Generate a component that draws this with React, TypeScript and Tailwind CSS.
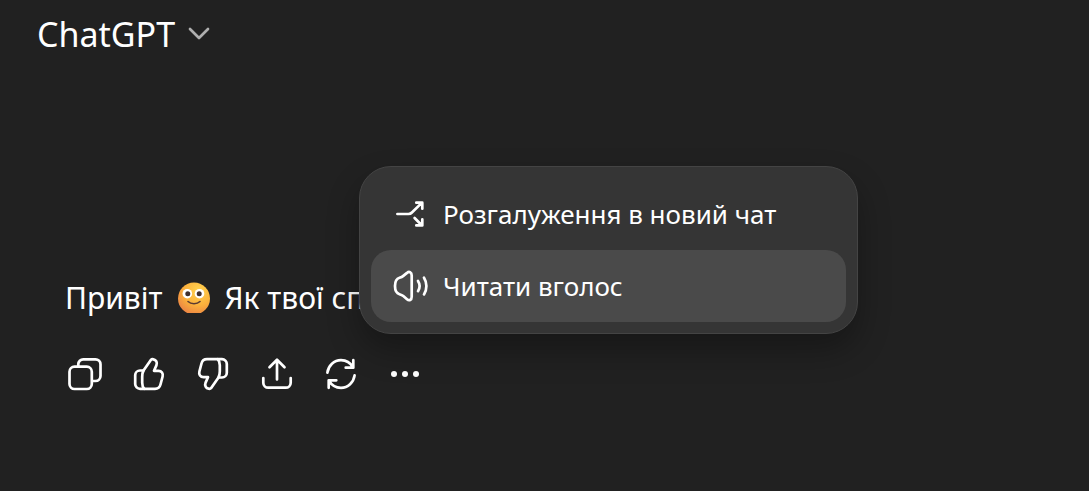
import type { ReactNode, SVGProps } from 'react'

function Icon({ children, ...props }: SVGProps<SVGSVGElement>) {
  return (
    <svg
      fill="none"
      stroke="currentColor"
      strokeWidth={2.7}
      strokeLinecap="round"
      strokeLinejoin="round"
      aria-hidden="true"
      {...props}
    >
      {children}
    </svg>
  )
}

const thumb = (
  <>
    <path d="M22 5.8 14.5 16.5H11a4.8 4.8 0 0 0-4.8 4.8V30A4.8 4.8 0 0 0 11 34.8h15c2.8 0 4.8-1.6 5.5-4.3l2.1-8c.8-3.1-1-5.7-4.1-5.7H25l2.4-5.4c1.2-2.9-.3-5.6-3-6.1-1-.2-1.8-.2-2.4.5Z" />
    <path d="M14.5 16.5c-1 1.9-1.3 3.7-1.3 6.2v6.1c0 2.6.6 4.6 2 6" />
  </>
)

const actions: { label: string; icon: ReactNode }[] = [
  {
    label: 'Копіювати',
    icon: (
      <>
        <rect x="4.5" y="12.7" width="22.3" height="22.3" rx="5" />
        <path d="M13.3 12.2v-1.9a5 5 0 0 1 5-5h12.2a5 5 0 0 1 5 5V22a5 5 0 0 1-5 5h-3.2" />
      </>
    ),
  },
  { label: 'Гарна відповідь', icon: thumb },
  { label: 'Погана відповідь', icon: <g transform="rotate(180 20 20)">{thumb}</g> },
  {
    label: 'Поділитися',
    icon: (
      <>
        <path d="M20 25.5V6M12.5 13.3 20 5.8l7.5 7.5" />
        <path d="M6.3 24v4.7a5 5 0 0 0 5 5h17.4a5 5 0 0 0 5-5V24" />
      </>
    ),
  },
  {
    label: 'Спробувати ще раз',
    icon: (
      <>
        <path d="M6.4 18.6C7.4 11.6 13 6.2 20 6.2c5 0 9.4 2.6 12 7.2M32.3 6.2v7.5h-7.6" />
        <path d="M33.6 21.4C32.6 28.4 27 33.8 20 33.8c-5 0-9.4-2.6-12-7.2M7.7 33.8v-7.5h7.6" />
      </>
    ),
  },
]

const menuItems: { label: string; active: boolean; icon: ReactNode }[] = [
  {
    label: 'Розгалуження в новий чат',
    active: false,
    icon: (
      <>
        <path d="M4.4 18h11c1.500 0 2.500-.4 3.500-1.500l9.900-9.600M23.300 6.700h6v6" />
        <path d="m21.600 22 7.200 7.200M23.300 29.400h6v-6" />
      </>
    ),
  },
  {
    label: 'Читати вголос',
    active: true,
    icon: (
      <>
        <path d="M18.7 7.5v21.2c0 3.4-2.6 4.4-4.7 2.6l-3.7-3.2c-1.3-1.1-2.2-1.4-3.8-1.9C3.2 25.2 2 22.5 2 18s1.2-7.2 4.500-8.200c1.600-.5 2.500-.8 3.800-1.900L14 4.900c2.100-1.800 4.700-.8 4.700 2.600Z" />
        <path d="M25 13c2 3.100 2 7.100 0 10.200M31 9.700c3.200 5 3.200 11.700 0 16.700" />
      </>
    ),
  },
]

function SmileEmoji() {
  return (
    <svg role="img" aria-label="🙂" viewBox="0 0 32 32" className="mr-3.5 ml-4 size-8 shrink-0">
      <defs>
        <radialGradient id="face" cx="0.65" cy="0.25" r="0.85">
          <stop offset="0" stopColor="#ffd34f" />
          <stop offset="0.55" stopColor="#fbb03c" />
          <stop offset="1" stopColor="#e97d45" />
        </radialGradient>
        <clipPath id="face-base">
          <rect width="32" height="31" />
        </clipPath>
      </defs>
      <circle cx="16" cy="16.5" r="16" fill="url(#face)" clipPath="url(#face-base)" />
      <circle cx="9.3" cy="11.7" r="4.8" fill="#fff" />
      <circle cx="21.5" cy="11.7" r="4.8" fill="#fff" />
      <circle cx="9.8" cy="11.7" r="2.5" fill="#40302f" />
      <circle cx="21.2" cy="11.7" r="2.5" fill="#40302f" />
      <path d="M10 19.5c3 3 9 3 12 0" fill="none" stroke="#5a3b32" strokeWidth="1.6" strokeLinecap="round" />
    </svg>
  )
}

function MoreMenu() {
  return (
    <div
      role="menu"
      className="absolute bottom-full -left-3.5 mb-2 w-[499px] rounded-[32px] border border-[#444444] bg-[#353535] p-[11px] shadow-[0_16px_32px_rgba(0,0,0,0.3)]"
    >
      {menuItems.map((item) => (
        <button
          key={item.label}
          type="button"
          role="menuitem"
          className={`flex h-[72px] w-full items-center gap-3.5 rounded-[20px] px-[22px] text-left text-[26px] text-white ${
            item.active ? 'bg-[#4a4a4a]' : ''
          }`}
        >
          <Icon viewBox="0 0 36 36" className="size-9 shrink-0">
            {item.icon}
          </Icon>
          <span className="whitespace-nowrap">{item.label}</span>
        </button>
      ))}
    </div>
  )
}

export default function App() {
  return (
    <div className="min-h-screen overflow-hidden bg-[#212121] font-['Noto_Sans',sans-serif] text-white">
      <header className="flex h-[68px] items-center px-[37px]">
        <button type="button" className="flex items-center gap-3 text-[34px]">
          <span>ChatGPT</span>
          <Icon viewBox="0 0 24 24" className="size-6 text-[#afafaf]">
            <path d="m3 7 9 9 9-9" />
          </Icon>
        </button>
      </header>

      <main className="px-[53px] pt-[206px]">
        <p className="flex items-center pl-3 text-[30px] leading-[48px] whitespace-nowrap">
          <span>Привіт</span>
          <SmileEmoji />
          <span>Як твої справи?</span>
        </p>

        <div className="mt-5 flex">
          {actions.map((action) => (
            <button
              key={action.label}
              type="button"
              aria-label={action.label}
              className="flex size-16 items-center justify-center"
            >
              <Icon viewBox="0 0 40 40" className="size-10">
                {action.icon}
              </Icon>
            </button>
          ))}
          <div className="relative">
            <button
              type="button"
              aria-label="Більше дій"
              aria-haspopup="menu"
              aria-expanded="true"
              className="flex size-16 items-center justify-center"
            >
              <svg viewBox="0 0 40 40" className="size-10" fill="currentColor" aria-hidden="true">
                <circle cx="9" cy="20" r="3" />
                <circle cx="20" cy="20" r="3" />
                <circle cx="31" cy="20" r="3" />
              </svg>
            </button>
            <MoreMenu />
          </div>
        </div>
      </main>
    </div>
  )
}
